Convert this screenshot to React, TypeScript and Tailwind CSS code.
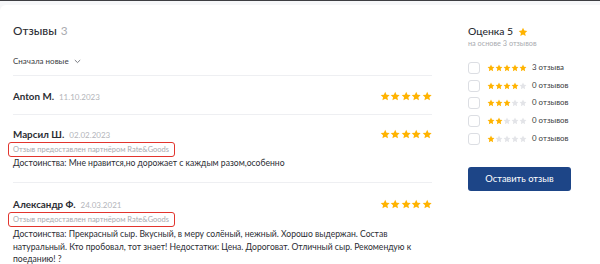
import React from "react";

const StarIcon = ({ size, color }: { size: number; color: string }) => (
  <svg width={size} height={size} viewBox="0 0 24 24" className="block">
    <path
      d="M12 1.8l3.1 6.6 7.2.9-5.3 5 1.4 7.1L12 17.9l-6.4 3.5 1.4-7.1-5.3-5 7.2-.9z"
      fill={color}
    />
  </svg>
);

const Stars = ({ n, size }: { n: number; size: number }) => (
  <div className="flex items-center">
    {[0, 1, 2, 3, 4].map((i) => (
      <StarIcon key={i} size={size} color={i < n ? "#ffb300" : "#e3e4e8"} />
    ))}
  </div>
);

const Partner = () => (
  <div className="mt-[1px] -ml-[5px] h-[15px] w-[167px] border-[1.5px] border-[#e2342d] rounded-[3px] px-[4px] flex items-center text-[7.5px] text-[#a9abb0] whitespace-nowrap">
    Отзыв предоставлен партнёром Rate&amp;Goods
  </div>
);

const NameRow = ({ name, date }: { name: string; date: string }) => (
  <div className="h-[14px] flex items-center justify-between">
    <div className="flex items-baseline gap-[5px]">
      <span className="text-[9.8px] font-bold text-[#2b2d33]">{name}</span>
      <span className="text-[8px] text-[#b3b5ba]">{date}</span>
    </div>
    <Stars n={5} size={10.4} />
  </div>
);

export default function App() {
  const rows = [
    { n: 5, t: "3 отзыва" },
    { n: 4, t: "0 отзывов" },
    { n: 3, t: "0 отзывов" },
    { n: 2, t: "0 отзывов" },
    { n: 1, t: "0 отзывов" },
  ];
  return (
    <div
      className="w-[600px] h-[264px] overflow-hidden bg-[#f6f7f9] border-t border-[#3d3e42]"
      style={{ fontFamily: "Lato, 'Noto Sans', sans-serif" }}
    >
      <div className="mt-[4px] h-[260px] bg-white rounded-tl-[6px] flex">
        {/* Left column */}
        <div className="ml-[13px] w-[419px] pt-[18px]">
          <div className="h-[16px] flex items-center gap-[4px]">
            <span className="text-[11.8px] font-medium text-[#2b2d33]">Отзывы</span>
            <span className="text-[11.8px] text-[#a9abb0]">3</span>
          </div>
          <div className="mt-[15px] h-[14px] flex items-center gap-[4px] text-[8px] text-[#3a3c42]">
            Сначала новые
            <svg width="7" height="5" viewBox="0 0 7 5" className="ml-[1px]">
              <path d="M0.8 1l2.7 2.6L6.2 1" stroke="#6b6e75" strokeWidth="0.9" fill="none" />
            </svg>
          </div>
          <div className="mt-[7px] border-t border-[#eeeff2] pt-[13px] pb-[11px]">
            <NameRow name="Anton M." date="11.10.2023" />
          </div>
          <div className="border-t border-[#eeeff2] pt-[12px] pb-[13px]">
            <NameRow name="Марсил Ш." date="02.02.2023" />
            <Partner />
            <div className="text-[8.6px] leading-[12px] text-[#2b2d33]">
              Достоинства: Мне нравится,но дорожает с каждым разом,особенно
            </div>
          </div>
          <div className="border-t border-[#eeeff2] pt-[14px]">
            <NameRow name="Александр Ф." date="24.03.2021" />
            <Partner />
            <div className="mt-[1px] text-[8.6px] leading-[12.5px] text-[#2b2d33] w-[400px]">
              Достоинства: Прекрасный сыр. Вкусный, в меру солёный, нежный. Хорошо выдержан. Состав натуральный. Кто пробовал, тот знает! Недостатки: Цена. Дороговат. Отличный сыр. Рекомендую к поеданию! ?
            </div>
          </div>
        </div>

        {/* Right column */}
        <div className="ml-[36px] w-[103px] pt-[20px]">
          <div className="h-[14px] flex items-center gap-[5px]">
            <span className="text-[10.4px] font-medium text-[#2b2d33]">Оценка 5</span>
            <StarIcon size={10} color="#ffb300" />
          </div>
          <div className="h-[10px] flex items-center text-[7.3px] text-[#a9abb0] whitespace-nowrap">
            на основе 3 отзывов
          </div>
          <div className="mt-[10px] flex flex-col">
            {rows.map((r) => (
              <div key={r.n} className="h-[17.75px] flex items-center">
                <div className="w-[12px] h-[12px] rounded-[3px] border border-[#dcdee3] bg-white" />
                <div className="ml-[7px]">
                  <Stars n={r.n} size={8} />
                </div>
                <span className="ml-[5px] text-[7.9px] text-[#3a3c42] whitespace-nowrap">{r.t}</span>
              </div>
            ))}
          </div>
          <button className="mt-[19px] w-[103px] h-[24px] rounded-[3px] bg-[#1d4587] text-white text-[9.4px] flex items-center justify-center">
            Оставить отзыв
          </button>
        </div>
      </div>
    </div>
  );
}
